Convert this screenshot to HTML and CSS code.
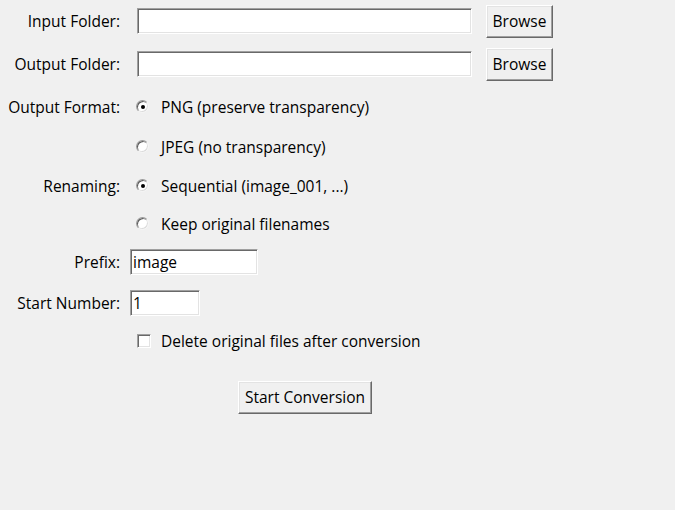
FILE: index.html
```html
<!DOCTYPE html>
<html>
<head>
<meta charset="utf-8">
<title>Image Converter</title>
<link rel="stylesheet" href="styles.css">
</head>
<body>
<div class="form">
  <div class="lbl">Input Folder:</div>
  <div class="field">
    <span class="entry path"></span>
    <button class="btn browse">Browse</button>
  </div>

  <div class="lbl">Output Folder:</div>
  <div class="field">
    <span class="entry path"></span>
    <button class="btn browse">Browse</button>
  </div>

  <div class="lbl">Output Format:</div>
  <div class="field choice">
    <span class="radio on"></span><span class="opt">PNG (preserve transparency)</span>
  </div>

  <div class="lbl"></div>
  <div class="field choice">
    <span class="radio"></span><span class="opt">JPEG (no transparency)</span>
  </div>

  <div class="lbl">Renaming:</div>
  <div class="field choice">
    <span class="radio on"></span><span class="opt">Sequential (image_001, ...)</span>
  </div>

  <div class="lbl"></div>
  <div class="field choice">
    <span class="radio"></span><span class="opt">Keep original filenames</span>
  </div>

  <div class="lbl">Prefix:</div>
  <div class="field">
    <span class="entry short prefix">image</span>
  </div>

  <div class="lbl">Start Number:</div>
  <div class="field">
    <span class="entry short number">1</span>
  </div>

  <div class="lbl"></div>
  <div class="field choice">
    <span class="check"></span><span class="opt check-text">Delete original files after conversion</span>
  </div>

  <div class="lbl"></div>
  <div class="field"></div>

  <div class="lbl"></div>
  <div class="field">
    <button class="btn start">Start Conversion</button>
  </div>
</div>
</body>
</html>
```

FILE: styles.css
```css
html, body {
  margin: 0;
  padding: 0;
  background: #f0f0f0;
}

body {
  width: 675px;
  height: 510px;
  overflow: hidden;
  font-family: "Open Sans", "Noto Sans", sans-serif;
  font-size: 15.5px;
  color: #000;
}

.form {
  display: grid;
  grid-template-columns: 120px 1fr;
  grid-template-rows: 42px 44px 41px 39px 39px 37px 40px 42px 34px 22px 34px;
}

.lbl {
  display: flex;
  align-items: center;
  justify-content: flex-end;
  white-space: nowrap;
}

.field {
  display: flex;
  align-items: center;
  white-space: nowrap;
}

/* sunken entry box */
.entry {
  box-sizing: border-box;
  display: flex;
  align-items: center;
  height: 26px;
  padding-left: 2px;
  background: #fff;
  border: 1px solid;
  border-color: #a0a0a0 #ffffff #ffffff #a0a0a0;
  box-shadow: inset 1px 1px 0 #696969, inset -1px -1px 0 #e3e3e3;
}

.entry.path {
  width: 335px;
  margin-left: 17px;
}

.entry.short {
  margin-left: 10px;
}

.entry.prefix { width: 128px; }
.entry.number { width: 70px; }

/* raised push button */
.btn {
  box-sizing: border-box;
  font: inherit;
  color: #000;
  background: #f0f0f0;
  border: 1px solid;
  border-color: #ffffff #696969 #696969 #ffffff;
  box-shadow: inset -1px -1px 0 #a0a0a0, inset 1px 1px 0 #e3e3e3;
  padding: 0;
  height: 33px;
}

.browse {
  width: 67px;
  margin-left: 14px;
}

.start {
  width: 134px;
  margin-left: 118px;
}

.opt {
  margin-left: 12px;
}

.check-text {
  margin-left: 10px;
}

/* round option indicator */
.radio {
  box-sizing: border-box;
  position: relative;
  flex: none;
  width: 13px;
  height: 13px;
  margin-left: 16px;
  border-radius: 50%;
  background: #fff;
  border: 1px solid;
  border-color: #9a9a9a #f4f4f4 #f4f4f4 #9a9a9a;
  box-shadow: inset 1px 1px 0 #5a5a5a, inset -1px -1px 0 #dcdcdc;
}

.radio.on::after {
  content: "";
  position: absolute;
  left: 3.5px;
  top: 3.5px;
  width: 4px;
  height: 4px;
  border-radius: 50%;
  background: #000;
}

/* square tick box */
.check {
  box-sizing: border-box;
  flex: none;
  width: 14px;
  height: 14px;
  margin-left: 17px;
  background: #fff;
  border: 1px solid;
  border-color: #a0a0a0 #ffffff #ffffff #a0a0a0;
  box-shadow: inset 1px 1px 0 #696969, inset -1px -1px 0 #e3e3e3;
}
```
